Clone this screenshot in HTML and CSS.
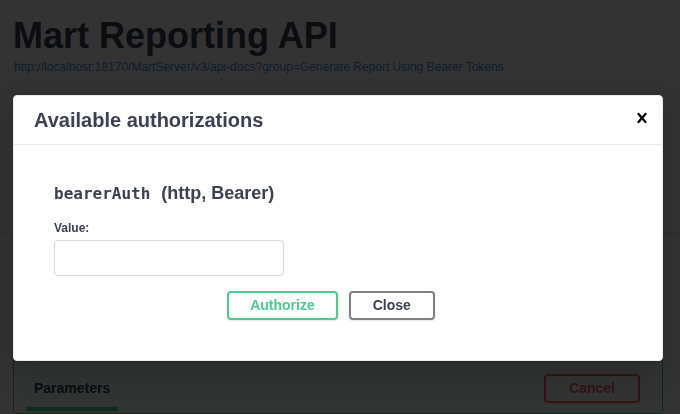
FILE: index.html
```html
<!DOCTYPE html>
<html lang="en">
<head>
<meta charset="utf-8">
<title>Mart Reporting API</title>
<link rel="stylesheet" href="styles.css">
</head>
<body>
<div class="page">
  <section class="info">
    <h2 class="title">Mart Reporting API</h2>
    <a class="url" href="#">http://localhost:18170/MartServer/v3/api-docs?group=Generate Report Using Bearer Tokens</a>
  </section>
  <section class="scheme-container"></section>
  <div class="ops">
    <div class="opblock">
      <div class="opblock-summary"></div>
      <div class="section-header">
        <div class="tab">Parameters</div>
        <button class="btn cancel">Cancel</button>
      </div>
    </div>
  </div>
</div>

<div class="backdrop"></div>

<div class="modal" role="dialog">
  <div class="modal-header">
    <h3>Available authorizations</h3>
    <button class="close-modal" aria-label="Close">
      <svg class="close-icon" viewBox="0 0 20 20" width="20" height="20" aria-hidden="true"><path d="M14.348 14.849c-.469.469-1.229.469-1.697 0L10 11.819l-2.651 3.029c-.469.469-1.229.469-1.697 0-.469-.469-.469-1.229 0-1.697l2.758-3.15-2.759-3.152c-.469-.469-.469-1.228 0-1.697.469-.469 1.228-.469 1.697 0L10 8.183l2.651-3.031c.469-.469 1.228-.469 1.697 0 .469.469.469 1.229 0 1.697l-2.758 3.152 2.758 3.150c.469.469.469 1.229 0 1.698z"/></svg>
    </button>
  </div>
  <div class="modal-content">
    <div class="auth-container">
      <h4><code>bearerAuth</code>&nbsp;(http, Bearer)</h4>
      <div class="field">
        <label for="token">Value:</label>
        <input id="token" type="text">
      </div>
      <div class="auth-btn-wrapper">
        <button class="btn authorize">Authorize</button>
        <button class="btn btn-done">Close</button>
      </div>
    </div>
  </div>
</div>
</body>
</html>
```
FILE: styles.css
```css
html, body {
  margin: 0;
  padding: 0;
}

body {
  background: #fff;
  font-family: "Liberation Sans", Arial, sans-serif;
  color: #3b4151;
  height: 414px;
  overflow: hidden;
}

.info {
  padding: 0 17px 0 13px;
}

.title {
  margin: 14px 0 0 0;
  font-size: 36px;
  line-height: 43px;
  font-weight: 700;
  color: #3b4151;
}

.url {
  display: block;
  margin: 3px 0 0 1px;
  font-size: 12px;
  line-height: 15px;
  color: #4990e2;
  text-decoration: none;
}

.scheme-container {
  margin-top: 20px;
  height: 138px;
  background: #fff;
  box-shadow: 0 1px 2px 0 rgba(0, 0, 0, 0.15);
}

.ops {
  padding: 20px 17px 0 13px;
}

.opblock {
  border: 1px solid #49cc90;
  border-radius: 4px;
  background: rgba(73, 204, 144, 0.1);
}

.opblock-summary {
  height: 109px;
}

.section-header {
  display: flex;
  align-items: center;
  justify-content: space-between;
  height: 50px;
  box-sizing: border-box;
  padding: 8px 22px 8px 20px;
  background: rgba(255, 255, 255, 0.8);
  box-shadow: 0 1px 2px rgba(0, 0, 0, 0.1);
}

.tab {
  position: relative;
  font-size: 14px;
  line-height: 18px;
  font-weight: 700;
  color: #3b4151;
}

.tab::after {
  content: "";
  position: absolute;
  left: -10%;
  top: 28px;
  width: 120%;
  height: 4px;
  background: #49cc90;
}

.btn {
  font-family: "Liberation Sans", Arial, sans-serif;
  font-size: 14px;
  line-height: 15px;
  font-weight: 700;
  padding: 5px 23px;
  border: 2px solid #808080;
  border-radius: 4px;
  background: transparent;
  box-shadow: 0 1px 2px rgba(0, 0, 0, 0.1);
  color: #3b4151;
  cursor: pointer;
}

.cancel {
  border-color: #ff6060;
  color: #ff6060;
}

.backdrop {
  position: fixed;
  inset: 0;
  background: rgba(0, 0, 0, 0.8);
}

.modal {
  position: absolute;
  left: 13px;
  top: 95px;
  width: 650px;
  box-sizing: border-box;
  background: #fff;
  border: 1px solid #ebebeb;
  border-radius: 4px;
  box-shadow: 0 10px 30px 0 rgba(0, 0, 0, 0.2);
}

.modal-header {
  display: flex;
  align-items: center;
  padding: 12px 0;
  border-bottom: 1px solid #ebebeb;
}

.modal-header h3 {
  flex: 1;
  margin: 0;
  padding: 0 20px;
  font-size: 20px;
  line-height: 23px;
  font-weight: 700;
  color: #3b4151;
}

.close-modal {
  background: none;
  border: 0;
  padding: 0 10px;
  margin-bottom: 4px;
  cursor: pointer;
}

.close-icon {
  display: block;
  fill: #000;
}

.modal-content {
  padding: 20px 20px 20px;
}

.auth-container {
  padding: 10px 20px;
}

.auth-container h4 {
  margin: 8px 0 17px;
  font-size: 18px;
  line-height: 21px;
  font-weight: 700;
  color: #3b4151;
}

.auth-container code {
  font-family: "DejaVu Sans Mono", "Liberation Mono", monospace;
  font-size: 16px;
  font-weight: 700;
  padding-right: 6px;
}

.field label {
  display: block;
  font-size: 12px;
  line-height: 14px;
  font-weight: 700;
  color: #3b4151;
}

.field input {
  display: block;
  margin: 5px 0;
  width: 230px;
  height: 36px;
  box-sizing: border-box;
  padding: 8px 10px;
  border: 1px solid #d9d9d9;
  border-radius: 4px;
  background: #fff;
  font-family: "Liberation Sans", Arial, sans-serif;
  font-size: 14px;
}

.auth-btn-wrapper {
  display: flex;
  justify-content: center;
  padding: 10px 0;
}

.authorize {
  padding: 5px 21px;
  margin-right: 11px;
  border-color: #49cc90;
  color: #49cc90;
}

.btn-done {
  padding: 5px 22px;
  margin-right: 1em;
}
```
